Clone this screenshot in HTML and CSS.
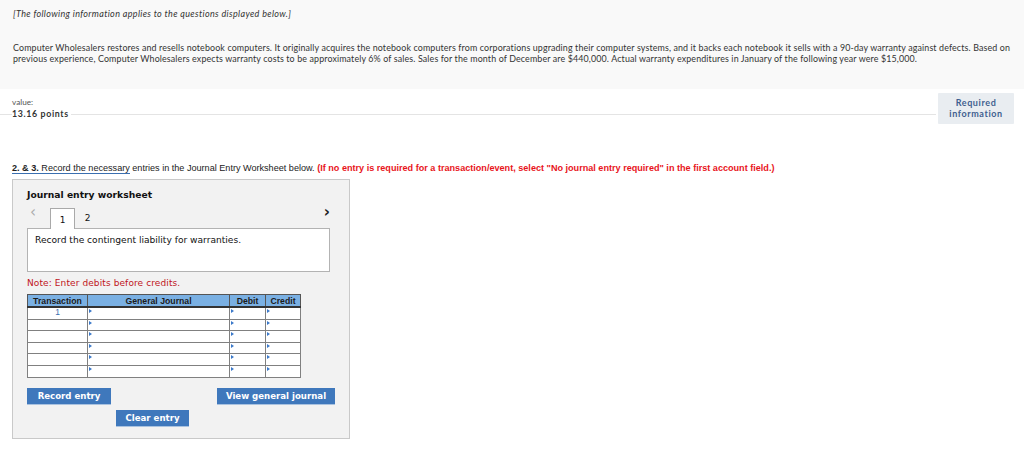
FILE: index.html
```html
<!DOCTYPE html>
<html>
<head>
<meta charset="utf-8">
<link rel="stylesheet" href="styles.css">
</head>
<body>
<div class="intro">
  <p class="note-top">[The following information applies to the questions displayed below.]</p>
  <p class="para">Computer Wholesalers restores and resells notebook computers. It originally acquires the notebook computers from corporations upgrading their computer systems, and it backs each notebook it sells with a 90-day warranty against defects. Based on previous experience, Computer Wholesalers expects warranty costs to be approximately 6% of sales. Sales for the month of December are $440,000. Actual warranty expenditures in January of the following year were $15,000.</p>
</div>
<div class="value-row">
  <div class="value">
    <div class="value-label">value:</div>
    <div class="value-points">13.16 points</div>
  </div>
  <div class="req">Required<br>information</div>
</div>
<p class="question"><span class="qlink"><b>2. &amp; 3.</b> Record the necessary</span> entries in the Journal Entry Worksheet below. <span class="red">(If no entry is required for a transaction/event, select "No journal entry required" in the first account field.)</span></p>
<div class="panel">
  <div class="panel-title">Journal entry worksheet</div>
  <div class="tabs">
    <span class="arrow prev">&lsaquo;</span>
    <span class="tab active">1</span>
    <span class="tab">2</span>
    <span class="spacer"></span>
    <span class="arrow next">&rsaquo;</span>
  </div>
  <div class="desc">Record the contingent liability for warranties.</div>
  <div class="note">Note: Enter debits before credits.</div>
  <table class="grid">
    <thead>
      <tr><th class="c1">Transaction</th><th class="c2">General Journal</th><th class="c3">Debit</th><th class="c4">Credit</th></tr>
    </thead>
    <tbody>
      <tr><td class="num">1</td><td><i class="mk"></i></td><td><i class="mk"></i></td><td><i class="mk"></i></td></tr>
      <tr><td></td><td><i class="mk"></i></td><td><i class="mk"></i></td><td><i class="mk"></i></td></tr>
      <tr><td></td><td><i class="mk"></i></td><td><i class="mk"></i></td><td><i class="mk"></i></td></tr>
      <tr><td></td><td><i class="mk"></i></td><td><i class="mk"></i></td><td><i class="mk"></i></td></tr>
      <tr><td></td><td><i class="mk"></i></td><td><i class="mk"></i></td><td><i class="mk"></i></td></tr>
      <tr><td></td><td><i class="mk"></i></td><td><i class="mk"></i></td><td><i class="mk"></i></td></tr>
    </tbody>
  </table>
  <div class="btn-row">
    <span class="btn w1">Record entry</span>
    <span class="btn w2">View general journal</span>
  </div>
  <div class="btn-row2">
    <span class="btn w3">Clear entry</span>
  </div>
</div>
</body>
</html>
```
FILE: styles.css
```css
html, body { margin: 0; padding: 0; background: #fff; }
body { width: 1024px; height: 459px; overflow: hidden; font-family: "Lato", "Open Sans", sans-serif; color: #333; }
p { margin: 0; }
.intro { background: #f9f9f9; height: 89px; padding: 0 10px 0 13px; box-sizing: border-box; }
.note-top { padding-top: 8px; font-size: 9px; font-style: italic; line-height: 11px; color: #333; letter-spacing: 0.35px; }
.para { margin-top: 23px; font-size: 8.9px; line-height: 11px; color: #333; letter-spacing: 0.13px; }
.value-row { display: flex; align-items: flex-start; padding: 5px 10px 0 12px; height: 41px; box-sizing: border-box; position: relative; }
.value-row::after { content: ""; position: absolute; left: 0; right: 88px; top: 25px; border-top: 1px solid #e4e4e4; z-index: 0; }
.value { flex: 1; position: relative; z-index: 1; display: flex; flex-direction: column; align-items: flex-start; }
.value-label { font-size: 8.2px; color: #555; line-height: 10px; margin-top: 3px; }
.value-points { background: #fff; font-size: 8.8px; font-weight: bold; color: #333; letter-spacing: 0.65px; line-height: 11px; padding-right: 2px; margin-top: 1px; }
.req { width: 76px; height: 31px; background: #e9edf1; color: #3f5f8f; font-size: 9px; font-weight: bold; text-align: center; line-height: 11px; padding-top: 4px; box-sizing: border-box; letter-spacing: 0.6px; margin-top: -1px; border-radius: 1px; position: relative; z-index: 1; }
.question { padding-left: 12px; margin-top: 33px; font-family: "Liberation Sans", Arial, sans-serif; font-size: 9.1px; line-height: 10px; color: #222; }
.qlink { border-bottom: 1px solid #3a6fb0; }
.red { color: #e8141b; font-weight: bold; }
.panel { margin: 6px 0 0 12px; width: 338px; height: 260px; box-sizing: border-box; background: #f2f2f2; border: 1px solid #c9c9c9; padding: 9px 19px 0 14px; font-family: "DejaVu Sans", Verdana, sans-serif; }
.panel-title { font-size: 9.2px; font-weight: bold; color: #111; line-height: 11px; }
.tabs { display: flex; align-items: flex-end; margin-top: 6px; height: 22px; }
.arrow { font-size: 15px; line-height: 14px; width: 20px; align-self: flex-start; }
.prev { color: #aaa; padding-left: 3px; margin-top: -1px; }
.next { color: #222; text-align: right; margin-top: -1px; font-weight: bold; }
.tab { font-size: 9px; width: 25px; height: 21px; box-sizing: border-box; text-align: center; line-height: 22px; color: #111; }
.tab.active { background: #fff; border: 1px solid #a9a9a9; border-bottom: none; position: relative; top: 1px; }
.spacer { flex: 1; }
.desc { height: 44px; background: #fff; border: 1px solid #b3b3b3; box-sizing: border-box; padding: 6px 7px; font-size: 9.1px; color: #111; line-height: 11px; }
.note { margin-top: 6px; font-size: 9px; color: #c0141c; line-height: 11px; letter-spacing: 0.1px; }
.grid { margin-top: 5px; border-collapse: collapse; font-family: "Liberation Sans", Arial, sans-serif; border: 1px solid #808080; }
.grid th { background: #7ab0e3; font-size: 8.7px; height: 11px; padding: 0; border: 1px solid #555; border-bottom: 2px solid #333; color: #1a1a1a; line-height: 10px; }
.grid td { background: #fff; height: 10.6px; padding: 0; border: 1px solid #808080; position: relative; font-size: 8.5px; line-height: 9px; vertical-align: top; }
.c1 { width: 59px; }
.c2 { width: 141px; }
.c3 { width: 35px; }
.c4 { width: 34px; }
.grid td.num { text-align: center; color: #3a6fb0; }
.mk { position: absolute; left: 1px; top: 1px; width: 0; height: 0; border-top: 2px solid transparent; border-bottom: 2px solid transparent; border-left: 3px solid #3a78c9; }
.btn-row { display: flex; justify-content: space-between; width: 308px; margin-top: 10px; margin-left: 0; }
.btn-row2 { display: flex; margin-top: 6px; padding-left: 89px; }
.btn { display: block; background: #3f78bc; color: #fff; font-family: "DejaVu Sans", Verdana, sans-serif; font-weight: bold; font-size: 8.6px; height: 16px; line-height: 16px; text-align: center; box-shadow: 0 1px 0 #aac3e0; }
.w1 { width: 84px; }
.w2 { width: 118px; }
.w3 { width: 73px; }
```
